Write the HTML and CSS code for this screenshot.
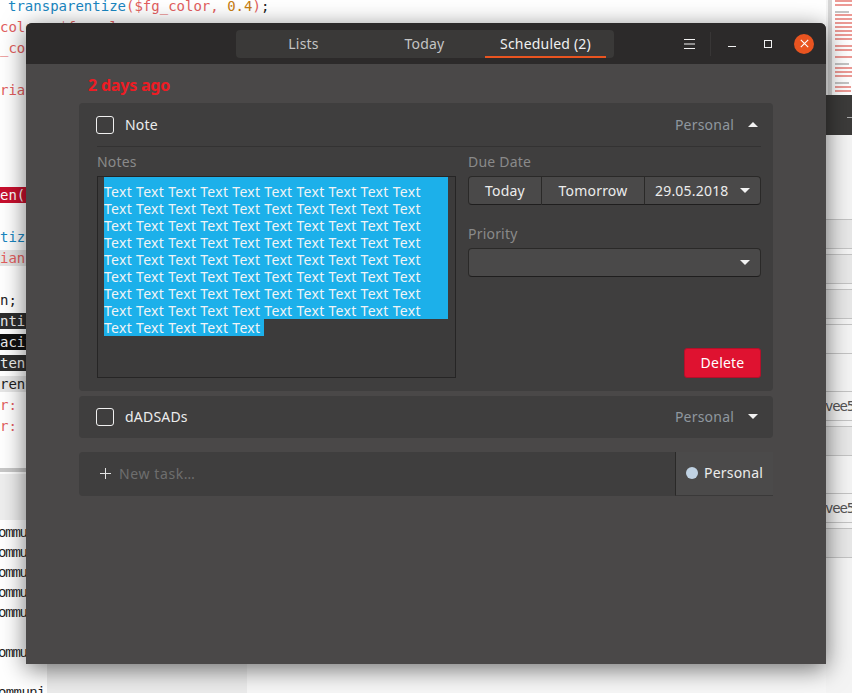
FILE: index.html
```html
<!DOCTYPE html>
<html lang="en">
<head>
    <meta charset="UTF-8">
    <title>Tasks</title>
    <link rel="stylesheet" href="styles.css">
</head>
<body>
    <div class="desktop">
        <!-- editor behind the window -->
        <div class="backdrop">
            <div class="code-top">
                <div class="code-line ind-8"><span class="c-blue">transparentize</span><span class="c-red">($fg_color, </span><span class="c-orange">0.4</span><span class="c-red">)</span>;</div>
                <div class="code-line c-red">color: $fg_col</div>
                <div class="code-line c-red">_col</div>
                <div class="code-line"></div>
                <div class="code-line c-red">rian</div>
                <div class="code-line"></div>
                <div class="code-line"></div>
                <div class="code-line"></div>
                <div class="code-line"></div>
                <div class="code-line hl hl-red">en($</div>
                <div class="code-line"></div>
                <div class="code-line c-blue">tize</div>
                <div class="code-line hl hl-grey c-red">ian</div>
                <div class="code-line"></div>
                <div class="code-line">n;</div>
                <div class="code-line hl hl-dark">ntiz</div>
                <div class="code-line hl hl-black">acit</div>
                <div class="code-line hl hl-dark">ten</div>
                <div class="code-line hl hl-grey">rent</div>
                <div class="code-line c-red">r: </div>
                <div class="code-line c-red">r: </div>
            </div>
            <div class="code-sep"></div>
            <div class="code-band"></div>
            <div class="code-bottom">
                <div class="term-line">ommun</div>
                <div class="term-line">ommun</div>
                <div class="term-line">ommun</div>
                <div class="term-line">ommun</div>
                <div class="term-line">ommun</div>
                <div class="term-line"></div>
                <div class="term-line">ommun</div>
                <div class="term-line"></div>
                <div class="term-line">ommuni</div>
            </div>
        </div>
        <div class="side-pane">
            <div class="minimap">
                <div class="mini-row"></div>
                <div class="mini-row"></div>
                <div class="mini-row mini-grey mini-space"></div>
                <div class="mini-row mini-tight"></div>
                <div class="mini-row"></div>
                <div class="mini-row"></div>
                <div class="mini-row"></div>
                <div class="mini-row"></div>
                <div class="mini-row"></div>
                <div class="mini-row"></div>
                <div class="mini-row mini-space"></div>
                <div class="mini-row"></div>
                <div class="mini-row mini-space"></div>
                <div class="mini-row mini-grey mini-space"></div>
                <div class="mini-row"></div>
                <div class="mini-row"></div>
                <div class="mini-row"></div>
                <div class="mini-row mini-grey mini-space"></div>
                <div class="mini-row mini-short"></div>
                <div class="mini-row mini-short"></div>
            </div>
            <div class="side-bar"><div class="side-dash"></div></div>
            <div class="side-list">
                <div class="side-first"></div>
                <div class="side-row side-shade"></div>
                <div class="side-gap"></div>
                <div class="side-row side-shade"></div>
                <div class="side-gap"></div>
                <div class="side-row side-shade"></div>
                <div class="side-gap"></div>
                <div class="side-row"></div>
                <div class="side-tall"></div>
                <div class="side-row side-text">vee5</div>
                <div class="side-gap"></div>
                <div class="side-row side-shade"></div>
                <div class="side-tall"></div>
                <div class="side-row side-text">vee5</div>
                <div class="side-gap"></div>
                <div class="side-row side-shade"></div>
                <div class="side-gap"></div>
            </div>
        </div>

        <div class="window">
            <header class="titlebar">
                <nav class="tabs">
                    <div class="tab">Lists</div>
                    <div class="tab">Today</div>
                    <div class="tab tab-active">Scheduled (2)</div>
                </nav>
                <div class="win-controls">
                    <svg class="menu-icon" width="11" height="10" viewBox="0 0 11 10"><path d="M0 .5h11M0 5h11M0 9.5h11" stroke="#f2f2f2" fill="none"/></svg>
                    <div class="win-sep"></div>
                    <svg class="min-icon" width="9" height="9" viewBox="0 0 9 9"><path d="M0 7.5h8" stroke="#f2f2f2" fill="none"/></svg>
                    <svg class="max-icon" width="9" height="9" viewBox="0 0 9 9"><rect x=".5" y="1.5" width="7" height="7" stroke="#f2f2f2" fill="none"/></svg>
                    <div class="close-btn">
                        <svg width="9" height="9" viewBox="0 0 9 9"><path d="M.8.8l7.4 7.4M8.2.8L.8 8.2" stroke="#fff" stroke-width="1.1" fill="none"/></svg>
                    </div>
                </div>
            </header>

            <main class="content">
                <div class="date-heading">2 days ago</div>

                <section class="card">
                    <div class="task-row">
                        <div class="checkbox"></div>
                        <div class="task-name">Note</div>
                        <div class="task-list">Personal</div>
                        <svg class="arrow" width="10" height="5" viewBox="0 0 10 5"><path d="M0 5L5 0l5 5z" fill="#f2f2f2"/></svg>
                    </div>
                    <div class="task-detail">
                        <div class="notes-col">
                            <div class="field-label">Notes</div>
                            <div class="notes-box">
                                <div class="sel-line sel-first">Text Text Text Text Text Text Text Text Text Text</div>
                                <div class="sel-line">Text Text Text Text Text Text Text Text Text Text</div>
                                <div class="sel-line">Text Text Text Text Text Text Text Text Text Text</div>
                                <div class="sel-line">Text Text Text Text Text Text Text Text Text Text</div>
                                <div class="sel-line">Text Text Text Text Text Text Text Text Text Text</div>
                                <div class="sel-line">Text Text Text Text Text Text Text Text Text Text</div>
                                <div class="sel-line">Text Text Text Text Text Text Text Text Text Text</div>
                                <div class="sel-line">Text Text Text Text Text Text Text Text Text Text</div>
                                <div class="sel-line sel-last">Text Text Text Text Text</div>
                            </div>
                        </div>
                        <div class="fields-col">
                            <div class="field-label">Due Date</div>
                            <div class="btn-group">
                                <div class="btn btn-today">Today</div>
                                <div class="btn btn-tomorrow">Tomorrow</div>
                                <div class="btn btn-date">29.05.2018
                                    <svg width="10" height="5" viewBox="0 0 10 5"><path d="M0 0l5 5 5-5z" fill="#f2f2f2"/></svg>
                                </div>
                            </div>
                            <div class="field-label priority-label">Priority</div>
                            <div class="btn combo">
                                <svg width="10" height="5" viewBox="0 0 10 5"><path d="M0 0l5 5 5-5z" fill="#f2f2f2"/></svg>
                            </div>
                            <div class="delete-wrap">
                                <div class="btn-delete">Delete</div>
                            </div>
                        </div>
                    </div>
                </section>

                <section class="card card-second">
                    <div class="task-row">
                        <div class="checkbox"></div>
                        <div class="task-name">dADSADs</div>
                        <div class="task-list">Personal</div>
                        <svg class="arrow" width="10" height="5" viewBox="0 0 10 5"><path d="M0 0l5 5 5-5z" fill="#f2f2f2"/></svg>
                    </div>
                </section>

                <section class="new-task">
                    <div class="new-entry">
                        <svg width="11" height="11" viewBox="0 0 11 11"><path d="M5.5 0v11M0 5.5h11" stroke="#e4e4e4" fill="none"/></svg>
                        <span class="new-placeholder">New task…</span>
                    </div>
                    <div class="list-picker">
                        <span class="list-dot"></span>
                        <span>Personal</span>
                    </div>
                </section>
            </main>
        </div>
    </div>
</body>
</html>
```

FILE: styles.css
```css
* {
    box-sizing: border-box;
}
html, body {
    margin: 0;
    padding: 0;
    background-color: #ffffff;
}
.desktop {
    position: relative;
    width: 852px;
    height: 693px;
    overflow: hidden;
    display: flex;
    font-family: "Noto Sans", sans-serif;
}

/* editor behind the window */
.backdrop {
    width: 826px;
    height: 693px;
    display: flex;
    flex-direction: column;
    font-family: "DejaVu Sans Mono", monospace;
    font-size: 14px;
    color: #1c1c1c;
}
.code-top {
    height: 469px;
    margin-top: -1px;
    overflow: hidden;
}
.code-line {
    height: 21px;
    line-height: 14px;
    white-space: nowrap;
}
.hl {
    height: 16px;
    line-height: 16px;
    margin-top: -1px;
    margin-bottom: 6px;
}
.ind-8 {
    padding-left: 8px;
}
.c-blue { color: #1a86c0; }
.c-red { color: #e25e5e; }
.c-orange { color: #c77d12; }
.hl-red { background-color: #c8102e; color: #fff; }
.hl-grey { background-color: #e6e6e6; }
.hl-dark { background-color: #2e2e2e; color: #eee; }
.hl-black { background-color: #111; color: #eee; }
.code-sep {
    height: 4px;
    margin-bottom: 2px;
    background-color: #c8c8c8;
}
.code-band {
    height: 46px;
    background-color: #eeeeee;
}
.code-bottom {
    flex: 1;
    padding-top: 5px;
    overflow: hidden;
    background: linear-gradient(90deg, #fff 47px, #ececec 47px, #ececec 247px, #f7f7f7 247px);
}
.term-line {
    height: 20px;
    line-height: 16px;
    margin-left: -2px;
    font-family: "Liberation Mono", monospace;
    font-size: 14px;
    letter-spacing: -1.2px;
}
.term-line:last-child {
    letter-spacing: -0.6px;
}

.side-pane {
    flex: 1;
    display: flex;
    flex-direction: column;
    background-color: #f4f4f4;
    overflow: hidden;
}
.minimap {
    height: 95px;
    padding-left: 9px;
    background: linear-gradient(90deg, #f4f4f4 2px, #d6d6d6 2px, #d6d6d6 6px, #fff 6px);
    display: flex;
    flex-direction: column;
    gap: 2px;
}
.mini-row {
    height: 2px;
    background-color: #ec9a95;
}
.mini-grey {
    width: 14px;
    background-color: #c4c4c4;
}
.mini-short {
    width: 16px;
}
.mini-space {
    margin-top: 3px;
}
.mini-tight {
    margin-top: -1px;
}
.side-bar {
    height: 40px;
    padding-top: 22px;
    background-color: #3c3b3a;
}
.side-dash {
    height: 1px;
    margin-left: 21px;
    background-color: #aaa;
}
.side-list {
    flex: 1;
}
.side-first {
    height: 84px;
}
.side-row {
    height: 29px;
    border-top: 1px solid #c4c4c4;
    font-family: "DejaVu Sans Mono", monospace;
    font-size: 14px;
    color: #555;
    line-height: 29px;
    white-space: nowrap;
}
.side-shade {
    background-color: #e8e8e8;
}
.side-gap {
    height: 6px;
    border-top: 1px solid #c4c4c4;
}
.side-tall {
    height: 38px;
    border-top: 1px solid #c4c4c4;
}
.side-text {
    text-indent: -1px;
    letter-spacing: -1.2px;
}

/* app window */
.window {
    position: absolute;
    left: 26px;
    top: 23px;
    width: 800px;
    height: 641px;
    background-color: #4a4848;
    border-radius: 6px 6px 0 0;
    box-shadow: 0 5px 24px rgba(0, 0, 0, 0.55);
    display: flex;
    flex-direction: column;
    color: #f2f2f2;
    font-size: 14px;
    letter-spacing: 0.2px;
}
.titlebar {
    height: 41px;
    background-color: #2c2a2a;
    border-radius: 6px 6px 0 0;
    display: flex;
    align-items: center;
    padding-left: 210px;
}
.tabs {
    width: 378px;
    height: 28px;
    background-color: #3a3938;
    border-radius: 4px;
    display: flex;
    padding: 0 8px 0 7px;
}
.tab {
    flex: 1;
    height: 28px;
    line-height: 28px;
    text-align: center;
    color: #c4c4c4;
    white-space: nowrap;
}
.tab-active {
    color: #f0f0f0;
    border-bottom: 2px solid #e95420;
}
.win-controls {
    margin-left: auto;
    display: flex;
    align-items: center;
    padding-right: 12px;
}
.menu-icon {
    margin-right: 15px;
}
.win-sep {
    width: 1px;
    height: 24px;
    background-color: #383636;
    margin-right: 17px;
}
.min-icon {
    margin-right: 27px;
}
.max-icon {
    margin-right: 21px;
}
.close-btn {
    width: 20px;
    height: 20px;
    border-radius: 50%;
    background-color: #e95420;
    display: flex;
    align-items: center;
    justify-content: center;
}

.content {
    flex: 1;
    padding: 10px 53px 0 53px;
}
.date-heading {
    height: 29px;
    line-height: 22px;
    padding-left: 9px;
    color: #ed1c24;
    font-size: 16px;
    font-weight: 700;
    letter-spacing: -0.2px;
}
.card {
    background-color: #3f3e3e;
    border-radius: 4px;
    padding: 0 12px 0 18px;
}
.task-row {
    height: 43px;
    display: flex;
    align-items: center;
}
.checkbox {
    width: 18px;
    height: 18px;
    border: 1px solid #f0f0f0;
    border-radius: 3px;
    margin-left: -1px;
    margin-right: 11px;
}
.task-name {
    flex: 1;
    color: #ececec;
}
.task-list {
    color: #8f979f;
    margin-right: 14px;
}
.arrow {
    margin-right: 3px;
}
.task-detail {
    border-top: 1px solid #333232;
    display: flex;
    height: 245px;
}
.field-label {
    color: #8a8a8a;
    height: 22px;
    line-height: 30px;
}
.notes-col {
    width: 359px;
}
.notes-box {
    width: 359px;
    height: 202px;
    margin-top: 7px;
    padding: 0 6px;
    border: 1px solid #262525;
    background-color: #3c3b3b;
    color: #f0f4f6;
}
.sel-line {
    height: 17px;
    line-height: 17px;
    width: 344px;
    background-color: #1cb0ea;
    white-space: nowrap;
    overflow: hidden;
    letter-spacing: 0.31px;
}
.sel-first {
    height: 23px;
    padding-top: 6px;
}
.sel-last {
    width: 160px;
}
.fields-col {
    width: 293px;
    margin-left: 12px;
    display: flex;
    flex-direction: column;
}
.btn-group {
    margin-top: 7px;
    height: 29px;
    display: flex;
}
.btn {
    height: 29px;
    background-color: #4a4949;
    border: 1px solid #2a2928;
    border-bottom-color: #1f1e1e;
    display: flex;
    align-items: center;
    justify-content: center;
    color: #ececec;
}
.btn-today {
    width: 74px;
    border-radius: 4px 0 0 4px;
}
.btn-tomorrow {
    width: 103px;
    border-left: 0;
}
.btn-date {
    width: 116px;
    border-left: 0;
    border-radius: 0 4px 4px 0;
    justify-content: space-between;
    padding: 0 10px;
}
.priority-label {
    margin-top: 14px;
}
.combo {
    margin-top: 7px;
    border-radius: 4px;
    justify-content: flex-end;
    padding-right: 10px;
}
.delete-wrap {
    margin-top: auto;
    padding-bottom: 13px;
    display: flex;
    justify-content: flex-end;
}
.btn-delete {
    width: 77px;
    height: 30px;
    line-height: 28px;
    text-align: center;
    color: #fff;
    background-color: #df1230;
    border: 1px solid #b3102a;
    border-radius: 3px;
}
.card-second {
    margin-top: 5px;
    height: 42px;
}
.card-second .task-row {
    height: 41px;
}
.new-task {
    margin-top: 14px;
    height: 44px;
    display: flex;
    background-color: #3f3e3e;
    border-radius: 4px 0 0 4px;
}
.new-entry {
    flex: 1;
    display: flex;
    align-items: center;
    padding: 0 0 1px 21px;
    gap: 8px;
}
.new-placeholder {
    color: #6e6e6e;
    letter-spacing: 0.6px;
}
.list-picker {
    width: 98px;
    display: flex;
    align-items: center;
    gap: 6px;
    padding: 0 0 2px 10px;
    background-color: #4b4a4a;
    border-left: 1px solid #2a2928;
    border-bottom: 1px solid #3a3939;
    color: #ececec;
}
.list-dot {
    width: 12px;
    height: 12px;
    border-radius: 50%;
    background-color: #c0d2e3;
}
```
